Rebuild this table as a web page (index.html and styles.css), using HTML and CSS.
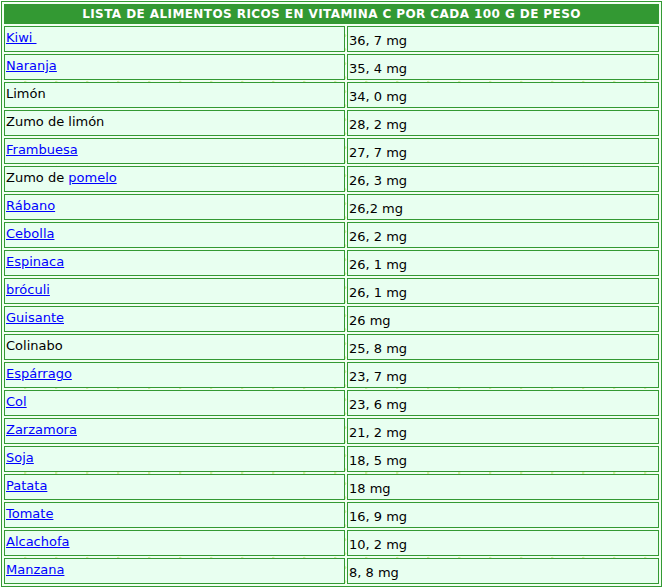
FILE: index.html
```html
<!DOCTYPE html>
<html lang="es">
<head>
<meta charset="utf-8">
<title>Lista de alimentos ricos en vitamina C</title>
<link rel="stylesheet" href="styles.css">
</head>
<body>
<table class="vit">
  <colgroup><col class="c1"><col class="c2"></colgroup>
  <tr><th colspan="2" class="head">LISTA DE ALIMENTOS RICOS EN VITAMINA C POR CADA 100 G DE PESO</th></tr>
  <tr><td class="food"><a href="#">Kiwi&nbsp;</a></td><td class="val">36, 7 mg</td></tr>
  <tr><td class="food"><a href="#">Naranja</a></td><td class="val">35, 4 mg</td></tr>
  <tr><td class="food">Limón</td><td class="val">34, 0 mg</td></tr>
  <tr><td class="food">Zumo de limón</td><td class="val">28, 2 mg</td></tr>
  <tr><td class="food"><a href="#">Frambuesa</a></td><td class="val">27, 7 mg</td></tr>
  <tr><td class="food">Zumo de <a href="#">pomelo</a></td><td class="val">26, 3 mg</td></tr>
  <tr><td class="food"><a href="#">Rábano</a></td><td class="val">26,2 mg</td></tr>
  <tr><td class="food"><a href="#">Cebolla</a></td><td class="val">26, 2 mg</td></tr>
  <tr><td class="food"><a href="#">Espinaca</a></td><td class="val">26, 1 mg</td></tr>
  <tr><td class="food"><a href="#">bróculi</a></td><td class="val">26, 1 mg</td></tr>
  <tr><td class="food"><a href="#">Guisante</a></td><td class="val">26 mg</td></tr>
  <tr><td class="food">Colinabo</td><td class="val">25, 8 mg</td></tr>
  <tr><td class="food"><a href="#">Espárrago</a></td><td class="val">23, 7 mg</td></tr>
  <tr><td class="food"><a href="#">Col</a></td><td class="val">23, 6 mg</td></tr>
  <tr><td class="food"><a href="#">Zarzamora</a></td><td class="val">21, 2 mg</td></tr>
  <tr><td class="food"><a href="#">Soja</a></td><td class="val">18, 5 mg</td></tr>
  <tr><td class="food"><a href="#">Patata</a></td><td class="val">18 mg</td></tr>
  <tr><td class="food"><a href="#">Tomate</a></td><td class="val">16, 9 mg</td></tr>
  <tr><td class="food"><a href="#">Alcachofa</a></td><td class="val">10, 2 mg</td></tr>
  <tr><td class="food"><a href="#">Manzana</a></td><td class="val">8, 8 mg</td></tr>
</table>
</body>
</html>
```
FILE: styles.css
```css
html, body {
  margin: 0;
  padding: 0;
  background: #ffffff;
}

.vit {
  margin: 1px 0 0 1px;
  width: 661px;
  border: 1px solid #339933;
  border-collapse: separate;
  border-spacing: 2px;
  table-layout: fixed;
  font-family: "DejaVu Sans", Verdana, sans-serif;
  font-size: 13px;
  color: #000000;
  background-color: #f2fff2;
  background-image:
    radial-gradient(circle at 30% 40%, #d6efa8 0 1px, transparent 1.5px),
    radial-gradient(circle at 75% 70%, #d6efa8 0 1px, transparent 1.5px);
  background-size: 24px 14px, 31px 17px;
}

.c1 {
  width: 341px;
}

.head {
  height: 18px;
  padding: 0;
  border: 1px solid #339933;
  background: #339933;
  color: #ffffff;
  font-weight: bold;
  font-size: 12px;
  text-align: center;
  vertical-align: middle;
  letter-spacing: 0.42px;
}

.food, .val {
  padding: 0 1px;
  border: 1px solid #339933;
  background: #e8fff0;
  line-height: 15px;
  vertical-align: top;
}

.food {
  padding-top: 3px;
  height: 21px;
}

.val {
  padding-top: 6px;
  height: 18px;
}

.food a {
  color: #0000ff;
  text-decoration: underline;
}
```
